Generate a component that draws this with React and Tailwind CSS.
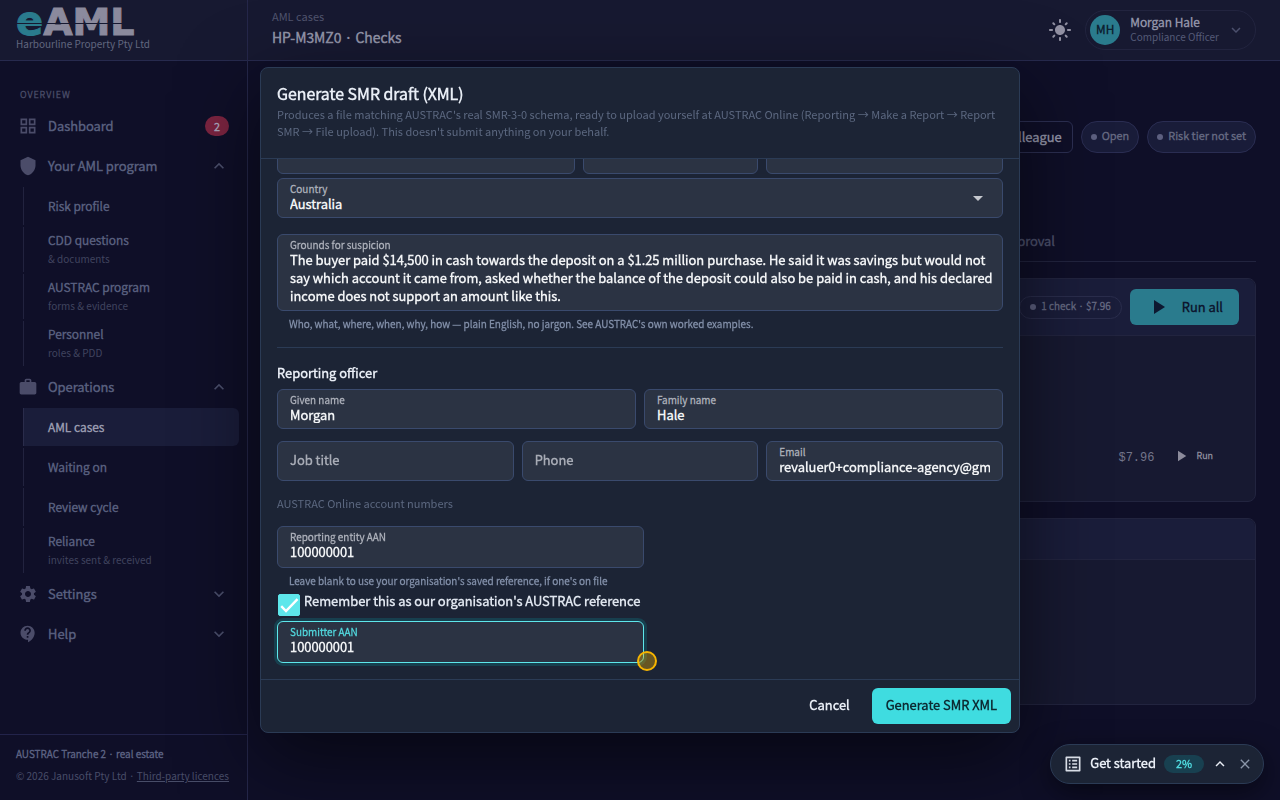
import React from "react";
import { useEffect, useRef, useState } from "react";
import {
  MdArrowDropDown,
  MdClose,
  MdContactSupport,
  MdExpandLess,
  MdExpandMore,
  MdLightMode,
  MdListAlt,
  MdOutlineGridView,
  MdPlayArrow,
  MdSettings,
  MdShield,
  MdWork,
} from "react-icons/md";

const strong =
  "font-['Noto_Sans_CJK_JP_DemiLight','Noto_Sans_CJK_JP',sans-serif] font-semibold ";

const grounds =
  "The buyer paid $14,500 in cash towards the deposit on a $1.25 million purchase. He said it was savings but would not say which account it came from, asked whether the balance of the deposit could also be paid in cash, and his declared income does not support an amount like this.";

function NavGroup({ icon: Icon, label, open, badge, expandable = true }) {
  return (
    <button
      className={
        strong +
        "flex h-[38px] w-full items-center px-2.5 text-left text-[13px] text-[#565d7c]"
      }
    >
      <Icon size={20} className="shrink-0 text-[#4b4c69]" />
      <span className="ml-2.5 flex-1">{label}</span>
      {badge && (
        <span className="flex h-5 w-6 items-center justify-center rounded-full bg-[#7b2440] text-[11px] text-[#a9a3b8]">
          {badge}
        </span>
      )}
      {expandable &&
        (open ? (
          <MdExpandLess size={20} className="text-[#4b4f6c]" />
        ) : (
          <MdExpandMore size={20} className="text-[#4b4f6c]" />
        ))}
    </button>
  );
}

function NavItem({ label, note, active }) {
  return (
    <a
      href="#"
      className={
        "ml-[15px] flex flex-col justify-center rounded-r-md border-l pl-6 text-[12px] leading-[18px] " +
        (note ? "h-[45px] pb-0.5 " : "h-[38px] ") +
        (active
          ? "border-[#2a2c4b] bg-[#1a1d3a] text-[#9698ad]"
          : "border-[#22233f] text-[#565d7c]")
      }
    >
      <span className={strong}>{label}</span>
      {note && (
        <span className="pt-0.5 text-[10px] leading-4 text-[#40445f]">
          {note}
        </span>
      )}
    </a>
  );
}

function Sidebar() {
  return (
    <aside className="flex w-[248px] shrink-0 flex-col border-r border-[#25274a] bg-[#0f0f28]">
      <div className="h-[61px] border-b border-[#272a4e] bg-[#171931] px-4 pt-2">
        <div className="relative flex h-7 w-fit items-baseline font-['DejaVu_Sans'] leading-7 font-bold text-[#8b8a9d] [-webkit-text-stroke:1px]">
          <span className="text-[40px] leading-[27px] text-[#2a7b8d]">e</span>
          <span className="text-[38px] leading-[27px]">AML</span>
          <div className="absolute inset-x-0 top-[15px] h-px bg-[#171931]" />
        </div>
        <p className="text-[10px] leading-4 text-[#61677f]">
          Harbourline Property Pty Ltd
        </p>
      </div>

      <nav className="flex flex-1 flex-col gap-0.5 px-2 pt-[26px]">
        <h2
          className={
            strong +
            "mb-0.5 pl-3 text-[9px] leading-4 tracking-widest text-[#474a65]"
          }
        >
          OVERVIEW
        </h2>
        <NavGroup
          icon={MdOutlineGridView}
          label="Dashboard"
          badge="2"
          expandable={false}
        />
        <NavGroup icon={MdShield} label="Your AML program" open />
        <NavItem label="Risk profile" />
        <NavItem label="CDD questions" note="& documents" />
        <NavItem label="AUSTRAC program" note="forms & evidence" />
        <NavItem label="Personnel" note="roles & PDD" />
        <NavGroup icon={MdWork} label="Operations" open />
        <NavItem label="AML cases" active />
        <NavItem label="Waiting on" />
        <NavItem label="Review cycle" />
        <NavItem label="Reliance" note="invites sent & received" />
        <NavGroup icon={MdSettings} label="Settings" />
        <NavGroup icon={MdContactSupport} label="Help" />
      </nav>

      <footer className="border-t border-[#22234a] px-4 pt-2 pb-[13px] text-[10px] leading-[22px] text-[#484d68]">
        <p className={strong + "text-[#5a6080]"}>
          AUSTRAC Tranche 2 · real estate
        </p>
        <p>
          © 2026 Janusoft Pty Ltd ·{" "}
          <a href="#" className="underline">
            Third-party licences
          </a>
        </p>
      </footer>
    </aside>
  );
}

function Chip({ children, className }) {
  return (
    <span
      className={
        strong +
        "flex items-center gap-[5px] rounded-full border text-[#62667f] " +
        className
      }
    >
      <span className="h-1.5 w-1.5 rounded-full bg-[#5d6080]" />
      <span className="pb-1">{children}</span>
    </span>
  );
}

function CasePage() {
  return (
    <div className="flex min-w-0 flex-1 flex-col">
      <header className="flex h-[61px] items-center justify-between border-b border-[#272a4e] bg-[#171931] px-6">
        <div className="pb-1">
          <p className="text-[11px] leading-[18px] text-[#50546e]">AML cases</p>
          <h1 className={strong + "text-[14px] leading-6 text-[#8f91a6]"}>
            HP-M3MZ0 · Checks
          </h1>
        </div>
        <div className="flex items-center gap-[13px]">
          <button aria-label="Toggle theme" className="text-[#9291a3]">
            <MdLightMode size={24} />
          </button>
          <button className="flex h-10 items-center rounded-full border border-[#22243f] pr-2.5 pl-1 text-left">
            <span
              className={
                strong +
                "flex size-[30px] items-center justify-center rounded-full bg-[#2a7b8d] pb-0.5 text-[12px] text-[#0d2232]"
              }
            >
              MH
            </span>
            <span className="ml-2.5 flex flex-col pb-[3px]">
              <span
                className={strong + "text-[12px] leading-[15px] text-[#8f91a6]"}
              >
                Morgan Hale
              </span>
              <span className="text-[10px] leading-[15px] text-[#555b78]">
                Compliance Officer
              </span>
            </span>
            <MdExpandMore size={18} className="ml-2 text-[#4b4f6c]" />
          </button>
        </div>
      </header>

      <main className="flex-1 px-6 pt-[60px]">
        <div className="flex items-center justify-end gap-2">
          <button
            className={
              strong +
              "h-8 rounded-md border border-[#2c2f52] px-2.5 text-[13px] text-[#8f91a6]"
            }
          >
            Assign colleague
          </button>
          <Chip className="h-8 border-[#2a2d52] bg-[#191c39] px-[9px] text-[11px]">
            Open
          </Chip>
          <Chip className="h-8 border-[#2a2d52] bg-[#191c39] px-[9px] text-[11px]">
            Risk tier not set
          </Chip>
        </div>

        <nav
          className={
            strong +
            "mt-[67px] flex h-[42px] items-center border-b border-[#22243f] text-[13px] text-[#4a4e69]"
          }
        >
          <a href="#" className="w-[783px] text-right">
            Approval
          </a>
        </nav>

        <section className="mt-4 rounded-lg border border-[#22243f] bg-[#171931]">
          <div className="flex h-[57px] items-center justify-end gap-2 rounded-t-lg border-b border-[#22243f] bg-[#1a1d3a] px-4">
            <Chip className="h-[23px] border-[#2a2d4c] px-2.5 text-[10px]">
              1 check · $7.96
            </Chip>
            <button
              className={
                strong +
                "flex h-9 items-center gap-3 rounded-md bg-[#2a7b8d] px-4 text-[13px] text-[#0d1830]"
              }
            >
              <MdPlayArrow size={24} />
              Run all
            </button>
          </div>
          <div className="flex h-[165px] items-end justify-end px-[42px] pb-9 text-[#8c8b9b]">
            <div className="flex h-[18px] items-center">
              <span className="mr-[18px] pt-1 font-['Liberation_Mono'] text-[12px] text-[#73758a]">
                $7.96
              </span>
              <button
                className={strong + "flex items-center gap-1.5 text-[9px]"}
              >
                <MdPlayArrow size={18} />
                Run
              </button>
            </div>
          </div>
        </section>

        <section className="mt-4 rounded-lg border border-[#22243f] bg-[#171931]">
          <div className="h-[41px] rounded-t-lg border-b border-[#22243f] bg-[#1a1d3a]" />
          <div className="h-36" />
        </section>
      </main>
    </div>
  );
}

function Field({ id, label, defaultValue, tall, focused }) {
  return (
    <div
      className={
        strong +
        "flex flex-col justify-center rounded-md border bg-[#2b3343] px-3 " +
        (tall ? "h-[42px] pb-1 " : "h-10 pb-0.5 ") +
        (focused
          ? "border-[#5ee7eb] ring-3 ring-[#173f4e]"
          : "border-[#3a4a6d]")
      }
    >
      <label
        htmlFor={id}
        className={
          "text-[10px] leading-[14px] " +
          (focused ? "text-[#4fd0d6]" : "text-[#a7abb5]")
        }
      >
        {label}
      </label>
      <input
        id={id}
        defaultValue={defaultValue}
        className="h-4 w-full bg-transparent text-[13px] leading-4 text-[#f1f3f5] outline-none"
      />
    </div>
  );
}

function EmptyField({ id, label }) {
  return (
    <input
      id={id}
      aria-label={label}
      placeholder={label}
      className={
        strong +
        "h-10 w-full rounded-md border border-[#3a4a6d] bg-[#2b3343] px-3 pb-1 text-[13px] text-[#f1f3f5] outline-none placeholder:text-[#a7abb5]"
      }
    />
  );
}

function SmrDialog() {
  const bodyRef = useRef(null);
  const [remember, setRemember] = useState(true);

  // The submitter field is the last one in the form
  useEffect(() => {
    bodyRef.current.scrollTop = bodyRef.current.scrollHeight;
  }, []);

  return (
    <div className="fixed inset-0 flex items-center justify-center">
      <div
        role="dialog"
        aria-labelledby="smr-title"
        className="relative flex max-h-[calc(100vh-134px)] w-[760px] max-w-full flex-col rounded-lg border border-[#2b3b55] bg-[#1c2435] shadow-[0_24px_80px_rgba(0,0,0,0.55)]"
      >
        <div className="border-b border-[#2b3b55] px-4 pt-3.5 pb-[18px]">
          <h2
            id="smr-title"
            className={strong + "pb-0.5 text-[16px] leading-[22px] text-[#e8edf5]"}
          >
            Generate SMR draft (XML)
          </h2>
          <p className="text-[11px] leading-[17px] text-[#5c6880]">
            Produces a file matching AUSTRAC's real SMR-3-0 schema, ready to
            upload yourself at AUSTRAC Online (Reporting → Make a Report →
            Report SMR → File upload). This doesn't submit anything on your
            behalf.
          </p>
        </div>

        <div
          ref={bodyRef}
          className="min-h-0 flex-1 overflow-y-auto px-4 pb-4 [scrollbar-width:none]"
        >
          <div className="grid grid-cols-12 gap-2 pt-4">
            <div className="col-span-5">
              <EmptyField id="suburb" label="Suburb" />
            </div>
            <div className="col-span-3">
              <EmptyField id="state" label="State" />
            </div>
            <div className="col-span-4">
              <EmptyField id="postcode" label="Postcode" />
            </div>
          </div>

          <div
            className={
              strong +
              "relative mt-1 flex h-10 flex-col justify-center rounded-md border border-[#3a4a6d] bg-[#2b3343] px-3 pb-0.5"
            }
          >
            <label
              htmlFor="country"
              className="text-[10px] leading-[14px] text-[#a7abb5]"
            >
              Country
            </label>
            <select
              id="country"
              className="h-4 w-full appearance-none bg-transparent text-[13px] leading-4 text-[#f1f3f5] outline-none"
            >
              <option>Australia</option>
            </select>
            <MdArrowDropDown
              size={24}
              className="pointer-events-none absolute top-[7px] right-3 text-[#c5c8ce]"
            />
          </div>

          <div
            className={
              strong +
              "mt-4 flex flex-col rounded-md border border-[#3a4a6d] bg-[#2b3343] pt-1 pr-1.5 pb-[5px] pl-3"
            }
          >
            <label
              htmlFor="grounds"
              className="text-[10px] leading-3 text-[#a7abb5]"
            >
              Grounds for suspicion
            </label>
            <textarea
              id="grounds"
              rows={3}
              defaultValue={grounds}
              className="w-full resize-none overflow-hidden bg-transparent text-[13px] leading-[18px] text-[#f1f3f5] outline-none"
            />
          </div>
          <p
            className={
              strong + "mt-[5px] pb-px pl-3 text-[10px] leading-4 text-[#7d8aa3]"
            }
          >
            Who, what, where, when, why, how — plain English, no jargon. See
            AUSTRAC's own worked examples.
          </p>

          <hr className="mt-3.5 border-[#2b3b55]" />

          <h3
            className={strong + "mt-[15px] text-[13px] leading-5 text-[#e8edf5]"}
          >
            Reporting officer
          </h3>
          <div className="mt-1.5 grid grid-cols-2 gap-2">
            <Field id="given" label="Given name" defaultValue="Morgan" />
            <Field id="family" label="Family name" defaultValue="Hale" />
          </div>
          <div className="mt-3 grid grid-cols-3 gap-2">
            <EmptyField id="job" label="Job title" />
            <EmptyField id="phone" label="Phone" />
            <Field
              id="email"
              label="Email"
              defaultValue="revaluer0+compliance-agency@gmail.com"
            />
          </div>

          <p className="mt-[13px] text-[11px] leading-[18px] text-[#5c6880]">
            AUSTRAC Online account numbers
          </p>
          <div className="mt-3.5 w-[367px] max-w-full">
            <Field
              id="entity"
              label="Reporting entity AAN"
              defaultValue="100000001"
              tall
            />
            <p
              className={
                strong +
                "mt-[5px] pb-px pl-3 text-[10px] leading-4 text-[#7d8aa3]"
              }
            >
              Leave blank to use your organisation's saved reference, if one's
              on file
            </p>
            <div className="relative mt-1 flex h-[22px] items-start pl-px">
              <input
                id="remember"
                type="checkbox"
                checked={remember}
                onChange={(e) => setRemember(e.target.checked)}
                className="size-[22px] shrink-0 appearance-none rounded-xs border border-[#5ee7eb] checked:bg-[#5ee7eb]"
              />
              {remember && (
                <svg
                  viewBox="0 0 22 22"
                  className="pointer-events-none absolute top-0 left-px size-[22px]"
                  fill="none"
                  stroke="#fff"
                  strokeWidth="2.4"
                >
                  <path d="M3.2 12.2 8 17 19.5 5.2" />
                </svg>
              )}
              <label
                htmlFor="remember"
                className={
                  strong +
                  "pl-1 text-[13px] leading-[14px] whitespace-nowrap text-[#dfe5ee]"
                }
              >
                Remember this as our organisation's AUSTRAC reference
              </label>
            </div>
            <div className="mt-[5px]">
              <Field
                id="submitter"
                label="Submitter AAN"
                defaultValue="100000001"
                tall
                focused
              />
            </div>
          </div>
        </div>

        <div
          className={
            strong +
            "flex justify-end gap-2 border-t border-[#2b3b55] p-2 text-[13px]"
          }
        >
          <button className="h-9 rounded-md px-3.5 pb-0.5 text-[#e8edf5]">
            Cancel
          </button>
          <button className="h-9 rounded-md bg-[#3fdce0] px-3.5 pb-0.5 text-[#0c2b33]">
            Generate SMR XML
          </button>
        </div>

        {/* click marker */}
        <div className="absolute right-[362px] bottom-[61px] size-5 rounded-full border-2 border-[#f7b500] bg-[#f7b500]/35" />
      </div>
    </div>
  );
}

function GetStarted() {
  return (
    <div
      className={
        strong +
        "fixed right-4 bottom-4 flex h-10 items-center rounded-full border border-[#2b3b55] bg-[#1c2435] pr-2.5 pl-3 text-[#e8edf5] shadow-[0_8px_28px_rgba(0,0,0,0.5)]"
      }
    >
      <MdListAlt size={20} className="text-[#d8dde6]" />
      <span className="ml-[7px] pb-0.5 text-[13px]">Get started</span>
      <span className="ml-2 flex h-[18px] w-10 items-center justify-center rounded-full bg-[#184050] pb-0.5 text-[11px] text-[#4fd9de]">
        2%
      </span>
      <button aria-label="Expand" className="ml-[7px]">
        <MdExpandLess size={18} stroke="currentColor" />
      </button>
      <button aria-label="Close" className="ml-2 text-[#8a95a8]">
        <MdClose size={16} />
      </button>
    </div>
  );
}

export default function App() {
  return (
    <div className="flex min-h-screen bg-[#0f0f28] font-['Noto_Sans_CJK_JP',sans-serif]">
      <Sidebar />
      <CasePage />
      <SmrDialog />
      <GetStarted />
    </div>
  );
}
